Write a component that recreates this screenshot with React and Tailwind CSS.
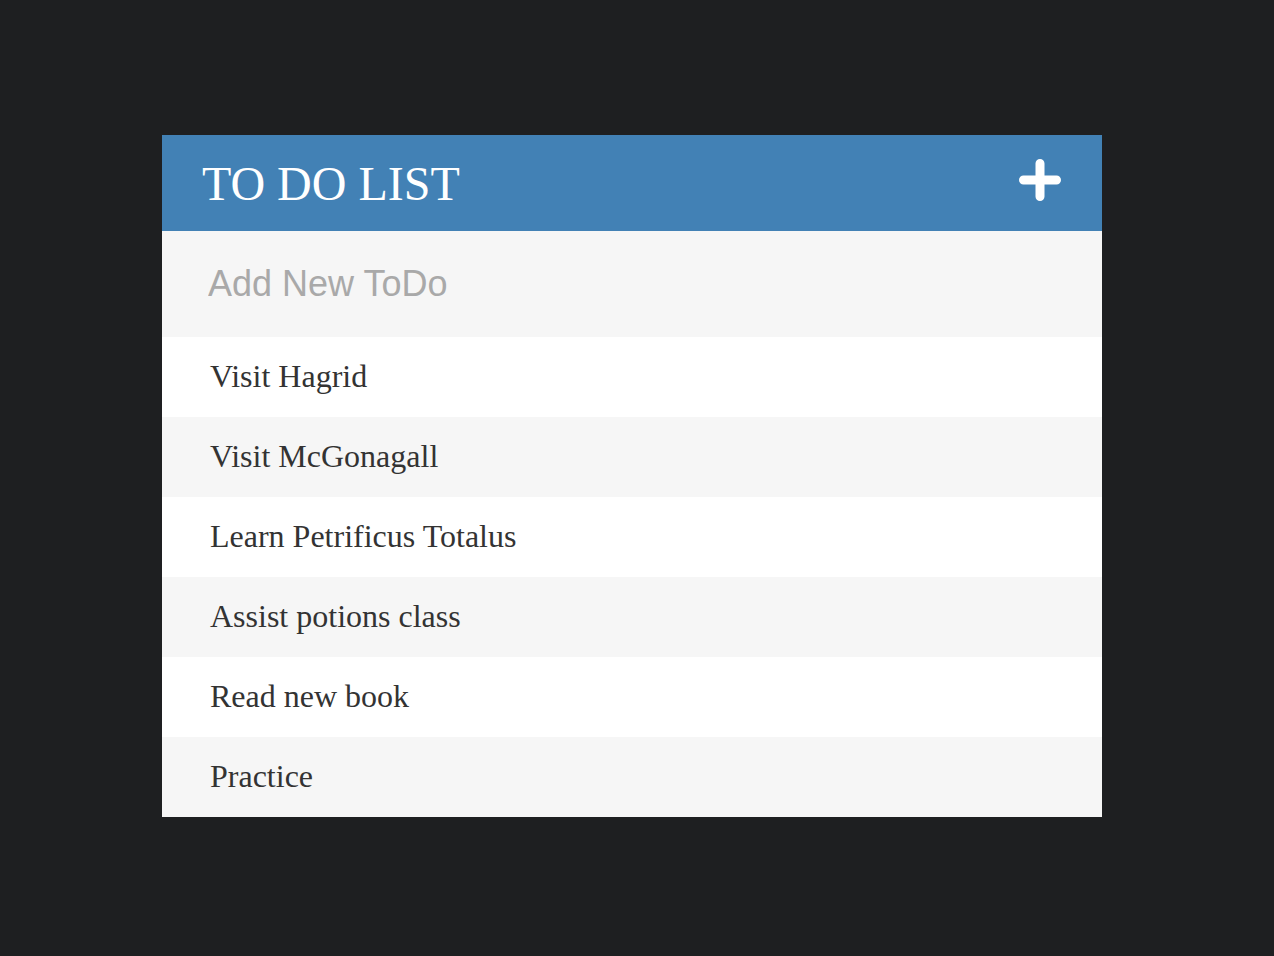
import React from 'react';

const todos = [
  'Visit Hagrid',
  'Visit McGonagall',
  'Learn Petrificus Totalus',
  'Assist potions class',
  'Read new book',
  'Practice',
];

function PlusIcon() {
  return (
    <svg width="42" height="42" viewBox="0 0 42 42" fill="none">
      <path d="M21 4.5V37.5M4.5 21H37.5" stroke="#ffffff" strokeWidth="9" strokeLinecap="round" />
    </svg>
  );
}

export default function App() {
  return (
    <div className="min-h-screen bg-[#1e1f21] pl-[162px] pt-[135px]">
      <div className="w-[940px] font-['Liberation_Serif',serif]">
        <div className="h-[96px] bg-[#4281b5] flex items-center justify-between pl-[40px] pr-[41px]">
          <h1 className="text-white text-[48px] leading-none pt-[1px]">TO DO LIST</h1>
          <button className="flex items-center justify-center -mt-[6px]">
            <PlusIcon />
          </button>
        </div>
        <div className="h-[106px] bg-[#f6f6f6] flex items-center pl-[46px]">
          <input
            type="text"
            placeholder="Add New ToDo"
            className="w-full bg-transparent outline-none text-[36px] text-[#333] placeholder:text-[#a9a9a9] font-['Liberation_Sans',Arial,sans-serif]"
          />
        </div>
        <ul>
          {todos.map((todo, i) => (
            <li
              key={todo}
              className={`h-[80px] flex items-center pl-[48px] pb-[2px] text-[32px] text-[#333] ${i % 2 === 0 ? 'bg-white' : 'bg-[#f6f6f6]'}`}
            >
              {todo}
            </li>
          ))}
        </ul>
      </div>
    </div>
  );
}
